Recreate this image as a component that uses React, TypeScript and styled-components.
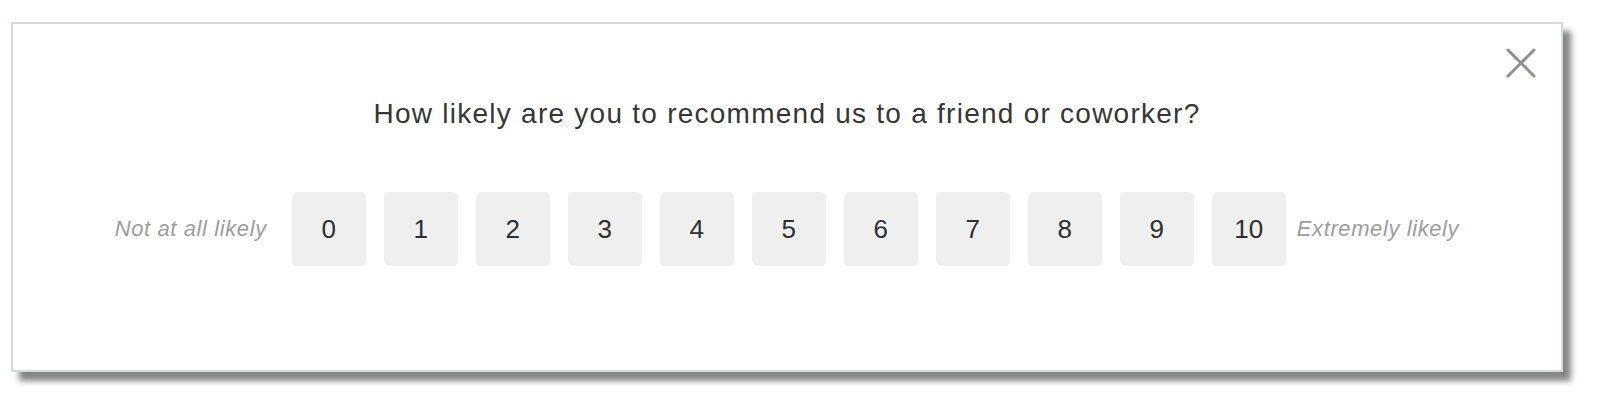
import React from "react";
import styled, { createGlobalStyle } from "styled-components";

const GlobalStyle = createGlobalStyle`
  html, body {
    margin: 0;
    padding: 0;
    background: #ffffff;
  }
  body {
    font-family: "Liberation Sans", Arial, sans-serif;
  }
`;

const Page = styled.div`
  padding: 22px 0 0 11px;
  width: 1600px;
  height: 405px;
  box-sizing: border-box;
`;

const Card = styled.div`
  position: relative;
  box-sizing: border-box;
  width: 1552px;
  height: 350px;
  background: #ffffff;
  border: 2px solid #d3dae0;
  box-shadow: 8px 9px 6px rgba(0, 0, 0, 0.48);
  display: flex;
  flex-direction: column;
  align-items: center;
  padding-top: 76px;
`;

const CloseButton = styled.button`
  position: absolute;
  top: 23px;
  right: 24px;
  width: 32px;
  height: 32px;
  padding: 0;
  border: none;
  background: transparent;
  cursor: pointer;
  display: flex;
  align-items: center;
  justify-content: center;
`;

const Title = styled.h2`
  margin: 0;
  font-size: 28px;
  line-height: 28px;
  font-weight: 400;
  color: #363636;
  letter-spacing: 1.25px;
`;

const ScaleRow = styled.div`
  display: flex;
  align-items: center;
  margin-top: 64px;
`;

const EndLabel = styled.span<{ $side: "left" | "right" }>`
  font-style: italic;
  font-size: 22px;
  color: #9d9d9d;
  white-space: nowrap;
  margin-right: ${(p) => (p.$side === "left" ? "25px" : "0")};
  margin-left: ${(p) => (p.$side === "right" ? "11px" : "0")};
  letter-spacing: 0.6px;
`;

const Scores = styled.div`
  display: flex;
  gap: 18px;
`;

const ScoreButton = styled.button`
  width: 74px;
  height: 74px;
  border: none;
  border-radius: 5px;
  background: #efefef;
  color: #2f2f2f;
  font-family: "Liberation Sans", Arial, sans-serif;
  font-size: 26px;
  padding: 0;
  display: flex;
  align-items: center;
  justify-content: center;
  cursor: pointer;
`;

export default function App() {
  const scores = Array.from({ length: 11 }, (_, i) => i);
  return (
    <>
      <GlobalStyle />
      <Page>
        <Card>
          <CloseButton aria-label="Close">
            <svg width="30" height="30" viewBox="0 0 30 30">
              <path
                d="M2 2 L28 28 M28 2 L2 28"
                stroke="#8b9098"
                strokeWidth="3"
                strokeLinecap="round"
              />
            </svg>
          </CloseButton>
          <Title>How likely are you to recommend us to a friend or coworker?</Title>
          <ScaleRow>
            <EndLabel $side="left">Not at all likely</EndLabel>
            <Scores>
              {scores.map((n) => (
                <ScoreButton key={n}>{n}</ScoreButton>
              ))}
            </Scores>
            <EndLabel $side="right">Extremely likely</EndLabel>
          </ScaleRow>
        </Card>
      </Page>
    </>
  );
}
